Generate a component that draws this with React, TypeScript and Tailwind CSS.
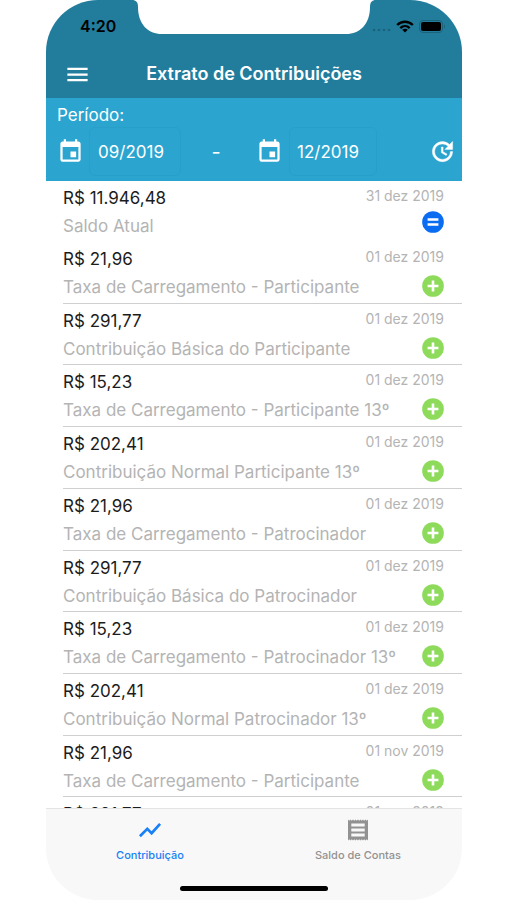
import { MdEvent, MdMenu } from "react-icons/md";

type Entry = {
  amount: string;
  label: string;
  date: string;
};

const entries: Entry[] = [
  { amount: "R$ 21,96", label: "Taxa de Carregamento - Participante", date: "01 dez 2019" },
  { amount: "R$ 291,77", label: "Contribuição Básica do Participante", date: "01 dez 2019" },
  { amount: "R$ 15,23", label: "Taxa de Carregamento - Participante 13º", date: "01 dez 2019" },
  { amount: "R$ 202,41", label: "Contribuição Normal Participante 13º", date: "01 dez 2019" },
  { amount: "R$ 21,96", label: "Taxa de Carregamento - Patrocinador", date: "01 dez 2019" },
  { amount: "R$ 291,77", label: "Contribuição Básica do Patrocinador", date: "01 dez 2019" },
  { amount: "R$ 15,23", label: "Taxa de Carregamento - Patrocinador 13º", date: "01 dez 2019" },
  { amount: "R$ 202,41", label: "Contribuição Normal Patrocinador 13º", date: "01 dez 2019" },
  { amount: "R$ 21,96", label: "Taxa de Carregamento - Participante", date: "01 nov 2019" },
  { amount: "R$ 291,77", label: "Contribuição Básica do Participante", date: "01 nov 2019" },
];

function Notch() {
  return (
    <svg
      className="absolute left-1/2 top-0 -translate-x-1/2"
      width="244"
      height="34"
      viewBox="0 0 244 34"
      fill="white"
      aria-hidden="true"
    >
      <path d="M0 0C4 0 6 2 6 7C6 24 16 34 30 34H214C228 34 238 24 238 7C238 2 240 0 244 0Z" />
    </svg>
  );
}

function StatusBar() {
  return (
    <div className="flex h-[50px] items-center justify-between pl-[34px] pr-4 pt-0.5 text-black">
      <span className="text-base font-semibold">4:20</span>
      <div className="flex items-center gap-[5px]">
        <svg width="19" height="14" viewBox="0 0 19 14" fill="#1b627b" aria-hidden="true">
          <circle cx="2" cy="11" r="1.3" />
          <circle cx="7" cy="11" r="1.3" />
          <circle cx="12" cy="11" r="1.3" />
          <circle cx="17" cy="11" r="1.3" />
        </svg>
        <svg width="18" height="13" viewBox="0 0 18 13" fill="none" stroke="black" strokeWidth="2.4" aria-hidden="true">
          <path d="M1.2 5C5.6 .6 12.4 .6 16.8 5" />
          <path d="M4.3 8.1C7 5.5 11 5.5 13.7 8.1" />
          <path d="M9 12.6L6.2 9.8C7.8 8.5 10.2 8.5 11.8 9.8Z" fill="black" stroke="none" />
        </svg>
        <svg width="27" height="13" viewBox="0 0 27 13" aria-hidden="true">
          <rect x="0.5" y="0.5" width="23" height="12" rx="3.5" fill="none" stroke="#1b627b" />
          <rect x="2" y="2" width="20" height="9" rx="2" fill="black" />
          <path d="M25 4.5C26.5 5 26.5 8 25 8.5Z" fill="#1b627b" />
        </svg>
      </div>
    </div>
  );
}

function EqualIcon() {
  return (
    <svg width="26" height="26" viewBox="0 0 24 24" role="img" aria-label="Saldo">
      <circle cx="12" cy="12" r="10" fill="#0a6cf0" />
      <path d="M7 9.7h10M7 14.3h10" stroke="white" strokeWidth="2.4" />
    </svg>
  );
}

function PlusIcon() {
  return (
    <svg width="26" height="26" viewBox="0 0 24 24" role="img" aria-label="Crédito">
      <circle cx="12" cy="12" r="10" fill="#8edb5c" />
      <path d="M7 12h10M12 7v10" stroke="white" strokeWidth="2.4" />
    </svg>
  );
}

function UpdateIcon() {
  return (
    <svg width="27" height="27" viewBox="0 0 24 24" fill="currentColor" stroke="currentColor" strokeWidth="0.4" aria-hidden="true">
      <path d="M21 10.120h-6.780l2.740-2.820c-2.730-2.700-7.150-2.800-9.880-.1-2.730 2.710-2.730 7.080 0 9.790s7.150 2.710 9.880 0C18.320 15.650 19 14.080 19 12.100h2c0 1.980-.88 4.550-2.640 6.290-3.510 3.480-9.210 3.480-12.720 0-3.500-3.470-3.530-9.110-.02-12.580s9.140-3.470 12.650 0L21 3v7.120zM12.500 8v4.250l3.500 2.080-.72 1.210L11 13V8h1.500z" />
    </svg>
  );
}

function TrendIcon() {
  return (
    <svg width="26" height="26" viewBox="0 0 24 24" fill="none" stroke="currentColor" strokeWidth="2.5" aria-hidden="true">
      <path d="M2.700 17.800L9.500 11l4 4L21.300 6.300" />
    </svg>
  );
}

function ReceiptIcon() {
  return (
    <svg width="26" height="26" viewBox="0 0 26 26" fill="currentColor" aria-hidden="true">
      <path
        fillRule="evenodd"
        d="M3 2.5l1.25 1.3L5.5 2.5l1.25 1.3L8 2.5l1.25 1.3L10.5 2.5l1.25 1.3L13 2.5l1.25 1.3L15.5 2.5l1.25 1.3L18 2.5l1.25 1.3L20.5 2.5l1.25 1.3L23 2.5V23.5l-1.25-1.3L20.5 23.5l-1.25-1.3L18 23.5l-1.25-1.3L15.5 23.5l-1.25-1.3L13 23.5l-1.25-1.3L10.5 23.5l-1.25-1.3L8 23.5l-1.25-1.3L5.5 23.5l-1.25-1.3L3 23.5ZM6.3 6.500v3h13.400v-3ZM6.300 11.500v3h13.400v-3ZM6.300 16.500v3h13.400v-3Z"
      />
    </svg>
  );
}

function EntryText({ amount, label }: { amount: string; label: string }) {
  return (
    <div className="text-[17px] leading-7">
      <p className="text-[#1c1c1c]">{amount}</p>
      <p className="text-[#b4b4b4]">{label}</p>
    </div>
  );
}

function EntryDate({ date }: { date: string }) {
  return <time className="whitespace-nowrap pr-0.5 text-sm leading-6 text-[#b4b4b4]">{date}</time>;
}

export default function App() {
  return (
    <div className="h-screen bg-white pl-[46px] pr-[45px] font-['Inter','Liberation_Sans',sans-serif]">
      <div className="flex h-full flex-col overflow-hidden rounded-[52px] bg-white">
        <header className="relative shrink-0 bg-[#227d9d]">
          <StatusBar />
          <Notch />
          <div className="grid h-12 grid-cols-[48px_1fr_48px] items-center text-white">
            <button type="button" aria-label="Menu" className="pl-[18px]">
              <MdMenu size={27} />
            </button>
            <h1 className="text-center text-lg font-semibold">Extrato de Contribuições</h1>
          </div>
        </header>

        <form className="shrink-0 bg-[#2ba5cf] pt-[5px] text-white">
          <p className="pl-[11px] text-[17px] leading-6">Período:</p>
          <div className="flex h-[54px] items-start">
            <label htmlFor="from" className="flex h-[49px] w-[43px] items-center pl-[11px]" aria-label="Data inicial">
              <MdEvent size={27} />
            </label>
            <input
              id="from"
              defaultValue="09/2019"
              className="h-[49px] w-[92px] rounded-md border border-[#289fc9] bg-transparent pl-2 text-[17px] outline-none"
            />
            <span className="flex h-[49px] w-[70px] items-center justify-center text-xl">-</span>
            <label htmlFor="to" className="flex h-[49px] w-[38px] items-center pl-[5px]" aria-label="Data final">
              <MdEvent size={27} />
            </label>
            <input
              id="to"
              defaultValue="12/2019"
              className="h-[49px] w-[88px] rounded-md border border-[#289fc9] bg-transparent pl-[7px] text-[17px] outline-none"
            />
            <button type="button" aria-label="Atualizar" className="ml-auto flex h-[49px] items-center pr-[6px]">
              <UpdateIcon />
            </button>
          </div>
        </form>

        <main className="min-h-0 flex-1 overflow-y-auto [scrollbar-width:none]">
          <section className="ml-[17px] flex h-[61px] justify-between pr-4 pt-[3px]">
            <EntryText amount="R$ 11.946,48" label="Saldo Atual" />
            <div className="flex flex-col items-end gap-px">
              <EntryDate date="31 dez 2019" />
              <EqualIcon />
            </div>
          </section>
          <ul className="ml-[17px] grid h-[617px] auto-rows-fr">
            {entries.map((entry, index) => (
              <li key={index} className="flex justify-between border-b border-[#cfcfcf] pr-4 pt-[3px]">
                <EntryText amount={entry.amount} label={entry.label} />
                <div className="-ml-14 flex flex-col items-end gap-1">
                  <EntryDate date={entry.date} />
                  <PlusIcon />
                </div>
              </li>
            ))}
          </ul>
        </main>

        <footer className="shrink-0 border-t border-[#e4e4e4] bg-[#f8f8f8]">
          <nav className="grid h-[77px] grid-cols-2 pt-2 text-[11px] font-medium">
            <a href="#contribuicao" className="flex flex-col items-center gap-1 text-[#1a80f5]">
              <TrendIcon />
              <span className="leading-4">Contribuição</span>
            </a>
            <a href="#saldo" className="flex flex-col items-center gap-1 text-[#929292]">
              <ReceiptIcon />
              <span className="leading-4">Saldo de Contas</span>
            </a>
          </nav>
          <div className="mx-auto mb-[9px] h-[5px] w-[148px] rounded-full bg-black" />
        </footer>
      </div>
    </div>
  );
}
